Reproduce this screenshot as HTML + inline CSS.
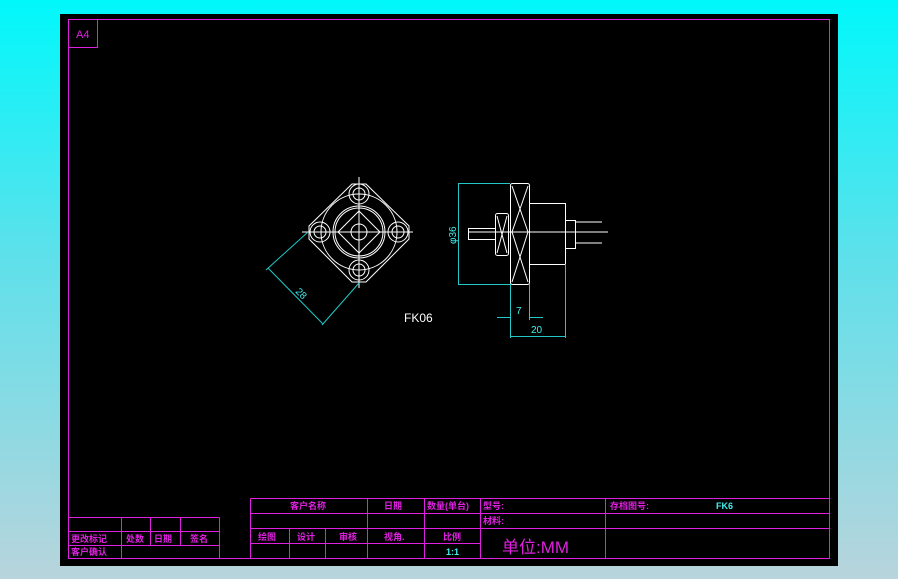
<!DOCTYPE html>
<html><head><meta charset="utf-8"><style>
html,body{margin:0;padding:0}
body{width:898px;height:579px;background:linear-gradient(#00f8fb 0%,#5fe0ea 45%,#b8d4dc 100%);position:relative;overflow:hidden;font-family:"Liberation Sans","Noto Sans CJK SC",sans-serif}
svg{position:absolute;left:0;top:0}
</style></head><body>
<svg width="898" height="579" viewBox="0 0 898 579">
<rect x="60" y="14" width="778" height="552" fill="#000"/>
<g stroke="#e020e0" stroke-width="1" fill="none">
<rect x="68.5" y="19.5" width="761" height="539"/>
<rect x="68.5" y="19.5" width="29" height="28"/>
<!-- title block -->
<path d="M250.5 498.5H829.5M250.5 513.5H829.5M250.5 528.5H829.5M250.5 543.5H480M250.5 558.5H829.5M250.5 498.5V558.5M367.5 498.5V558.5M424.5 498.5V558.5M480.5 498.5V558.5M605.5 498.5V558.5M289.5 528.5V558.5M325.5 528.5V558.5"/>
<path d="M68.5 517.5H219.5M68.5 531.5H219.5M68.5 545.5H219.5M219.5 517.5V558.5M121.5 517.5V545.5M150.5 517.5V545.5M180.5 517.5V545.5M121.5 545.5V558.5"/>
</g>
<g fill="#e020e0" font-size="9" font-weight="bold">
<text x="76" y="38" font-size="11" font-weight="normal">A4</text>
<text x="290" y="509">客户名称</text>
<text x="384" y="509">日期</text>
<text x="427" y="509">数量(单台)</text>
<text x="483" y="509">型号:</text>
<text x="610" y="509">存档图号:</text>
<text x="483" y="524">材料:</text>
<text x="258" y="540">绘图</text>
<text x="297" y="540">设计</text>
<text x="339" y="540">审核</text>
<text x="384" y="540">视角.</text>
<text x="443" y="540">比例</text>
<text x="502" y="553" font-size="17" font-weight="normal">单位:MM</text>
<text x="71" y="542">更改标记</text>
<text x="126" y="542">处数</text>
<text x="154" y="542">日期</text>
<text x="190" y="542">签名</text>
<text x="71" y="555">客户确认</text>
</g>
<g fill="#40f0f0" font-size="9" font-weight="bold">
<text x="716" y="509">FK6</text>
<text x="446" y="555">1:1</text>
</g>
<!-- left view -->
<g stroke="#fff" stroke-width="1" fill="none">
<path d="M352 184L366 184L409 226L409 239L366 282L352 282L309 239L309 226Z"/>
<circle cx="359" cy="232" r="38"/>
<circle cx="359" cy="232" r="26"/><circle cx="359" cy="232" r="24"/>
<path d="M359 211L380 232L359 253L338 232Z"/>
<circle cx="359" cy="232" r="8"/>
<circle cx="359" cy="194" r="10"/><circle cx="359" cy="194" r="6"/>
<circle cx="359" cy="270" r="10"/><circle cx="359" cy="270" r="6"/>
<circle cx="320" cy="232" r="10"/><circle cx="320" cy="232" r="6"/>
<circle cx="398" cy="232" r="10"/><circle cx="398" cy="232" r="6"/>
<path d="M359 177V288M302 232H413"/>
</g>
<g stroke="#20c8c8" stroke-width="1" fill="none">
<path d="M308 232L266 270M359 283L322 325M268 268L323 324"/>
</g>
<text x="0" y="0" fill="#40f0f0" font-size="10" transform="translate(295,292) rotate(45)">28</text>
<!-- right view -->
<g stroke="#fff" stroke-width="1" fill="none">
<rect x="510.5" y="183.5" width="19" height="101" rx="2"/>
<path d="M512 186L528 232L512 282M528 186L512 232L528 282"/>
<rect x="529.5" y="203.5" width="36" height="61"/>
<rect x="565.5" y="220.5" width="10" height="28"/>
<path d="M575 222H602M575 243H602M468 232H608"/>
<rect x="495.5" y="213.5" width="13" height="42" rx="2"/>
<path d="M497 216L507 253M507 216L497 253"/>
<rect x="468.5" y="228.5" width="27" height="11"/>
</g>
<g stroke="#20c8c8" stroke-width="1" fill="none">
<path d="M458.5 183V284M458 183.5H510M458 284.5H510M510.5 284V338M529.5 284V320M565.5 264V338M497 317.5H510M529 317.5H543M510 336.5H565"/>
</g>
<g fill="#40f0f0" font-size="10">
<text x="0" y="0" transform="translate(456,244) rotate(-90)">φ36</text>
<text x="516" y="314">7</text>
<text x="531" y="333">20</text>
</g>
<text x="404" y="322" fill="#fff" font-size="12">FK06</text>
</svg>
</body></html>
